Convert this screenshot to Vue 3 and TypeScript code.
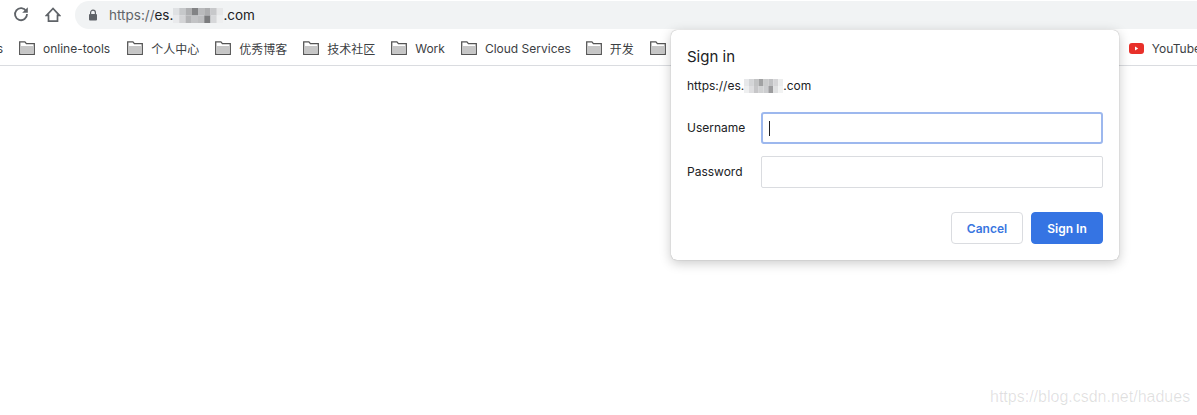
<script setup lang="ts">
const bookmarks: string[] = ['online-tools', '个人中心', '优秀博客', '技术社区', 'Work', 'Cloud Services', '开发', '']
const shades: string[][] = [
  ['#dfe1e3', '#c6c8ca', '#aeafb1', '#828385', '#b9babc', '#acadaf', '#c7c8ca', '#e6e7e8'],
  ['#e9eaec', '#d3d4d6', '#b3b4b6', '#c2c3c5', '#bcbdbf', '#7b7c7e', '#d6d7d9', '#eeeff0'],
]
const mosaic = shades.flatMap((row, y) => row.map((fill, x) => ({ id: `${x}-${y}`, x: x * 6, y: y * 7, fill })))
</script>

<template>
  <div class="page">
    <header class="toolbar">
      <svg class="tool-icon" viewBox="0 1 16 16" width="16" height="16" aria-hidden="true">
        <path d="M13.200 5.200A6 6 0 1 0 14 8" fill="none" stroke="#5f6368" stroke-width="1.800" />
        <path d="M14.800 1.200v5.600H9.200z" fill="#5f6368" />
      </svg>
      <svg class="tool-icon home" viewBox="0 0 16 16" width="16" height="16" aria-hidden="true">
        <path d="M8 1.500 1.600 8.300h1.900v5.900h9V8.300h1.900z" fill="none" stroke="#5f6368" stroke-width="1.700" stroke-linejoin="miter" />
      </svg>
      <div class="omnibox">
        <svg class="lock" viewBox="0 0 10 12" width="10" height="12" aria-hidden="true">
          <path d="M2.600 5V3.500a2.400 2.400 0 0 1 4.800 0V5" fill="none" stroke="#5f6368" stroke-width="1.200" />
          <rect x="1" y="5" width="8" height="6.400" rx="1" fill="#5f6368" />
        </svg>
        <span class="url"><span class="scheme">https://</span>es.<svg class="mosaic" viewBox="0 0 48 14" width="50" height="15" preserveAspectRatio="none" aria-hidden="true"><rect v-for="m in mosaic" :key="m.id" :x="m.x" :y="m.y" width="6" height="7" :fill="m.fill" /></svg>.com</span>
      </div>
    </header>

    <nav class="bookmarks">
      <span class="cut">s</span>
      <span v-for="(b, i) in bookmarks" :key="i" class="bookmark">
        <svg class="folder" viewBox="0 0 16 14" width="16" height="14" aria-hidden="true">
          <path d="M0.700 13.300V0.900h5.200l1.500 1.800h7.900v10.600z" fill="#fff" stroke="#555" stroke-width="1.300" />
          <rect x="1.300" y="5" width="13.400" height="7.700" fill="#c6c6c6" />
        </svg>
        <span v-if="b">{{ b }}</span>
      </span>
      <span class="bookmark youtube">
        <svg viewBox="0 0 15 11" width="15" height="11" aria-hidden="true">
          <rect width="15" height="11" rx="3" fill="#e8302a" />
          <path d="M6 3.500v4l3.200-2z" fill="#fff" />
        </svg>
        <span>YouTube</span>
      </span>
    </nav>

    <main class="content"></main>

    <section class="dialog">
      <h1 class="title">Sign in</h1>
      <p class="origin">https://es.<svg class="mosaic small" viewBox="0 0 48 14" width="39" height="14" preserveAspectRatio="none" aria-hidden="true"><rect v-for="m in mosaic" :key="m.id" :x="m.x" :y="m.y" width="6" height="7" :fill="m.fill" /></svg>.com</p>
      <div class="form">
        <label class="field-label">Username</label>
        <div class="input focused"><i class="caret"></i></div>
        <label class="field-label">Password</label>
        <div class="input"></div>
      </div>
      <div class="actions">
        <button class="btn cancel" type="button">Cancel</button>
        <button class="btn primary" type="button">Sign In</button>
      </div>
    </section>

    <span class="watermark">https://blog.csdn.net/hadues</span>
  </div>
</template>

<style>
html, body { margin: 0; background: #fff; overflow: hidden; }
</style>

<style scoped>
.page {
  position: relative;
  width: 1197px;
  height: 415px;
  overflow: hidden;
  background: #fff;
  font-family: Inter, "Noto Sans CJK SC", sans-serif;
  color: #3c4043;
}
.toolbar {
  display: flex;
  align-items: center;
  height: 30px;
  box-sizing: border-box;
  padding: 1px 0 1px 13px;
}
.tool-icon { flex: none; margin-right: 16px; }
.home { margin-right: 14px; }
.omnibox {
  flex: 1;
  height: 28px;
  display: flex;
  align-items: center;
  gap: 11px;
  padding-left: 13px;
  background: #f1f3f4;
  border-radius: 14px 0 0 14px;
}
.lock { flex: none; }
.url {
  display: flex;
  align-items: center;
  font-size: 13.5px;
  color: #202124;
}
.scheme { color: #5f6368; }
.mosaic { flex: none; display: block; filter: blur(0.6px); }
.small { opacity: 0.75; }
.bookmarks {
  display: flex;
  align-items: center;
  height: 36px;
  box-sizing: border-box;
  padding-top: 1px;
  border-bottom: 1px solid #dadce0;
  font-size: 12px;
  color: #3c4043;
  white-space: nowrap;
  overflow: hidden;
}
.cut { width: 3px; margin-right: 16px; overflow: hidden; flex: none; direction: rtl; }
.bookmark {
  display: flex;
  align-items: center;
  gap: 8px;
  flex: none;
  margin-right: 16px;
}
.bookmark:nth-child(2) { margin-right: 17px; }
.bookmark:nth-child(7) { margin-right: 15px; }
.folder { flex: none; }
.youtube { margin: 0 0 0 447px; gap: 8px; }
.content { height: 349px; }
.dialog {
  position: absolute;
  left: 671px;
  top: 30px;
  width: 448px;
  height: 230px;
  box-sizing: border-box;
  padding: 18px 16px 16px;
  background: #fff;
  border-radius: 6px;
  box-shadow: 0 0 1px rgba(0, 0, 0, .4), 0 3px 12px rgba(0, 0, 0, .22);
  color: #202124;
}
.title {
  margin: 0;
  font-size: 15px;
  font-weight: 400;
  line-height: 18px;
}
.origin {
  display: flex;
  align-items: center;
  margin: 12px 0 0;
  font-size: 12px;
  line-height: 16px;
}
.form {
  display: grid;
  grid-template-columns: 74px 342px;
  grid-auto-rows: 32px;
  row-gap: 12px;
  align-items: center;
  margin-top: 18px;
  font-size: 12px;
}
.field-label { line-height: 16px; }
.input {
  height: 32px;
  box-sizing: border-box;
  border: 1px solid #dadce0;
  border-radius: 2px;
  display: flex;
  align-items: center;
  padding-left: 7px;
}
.focused { border: 2px solid #9db8ee; border-radius: 3px; padding-left: 6px; }
.caret { display: block; width: 1px; height: 15px; background: #202124; }
.actions {
  display: flex;
  justify-content: flex-end;
  gap: 8px;
  margin-top: 24px;
}
.btn {
  width: 72px;
  height: 32px;
  box-sizing: border-box;
  border-radius: 4px;
  font-family: inherit;
  font-size: 12px;
  font-weight: 600;
  padding: 0;
}
.cancel { background: #fff; border: 1px solid #dadce0; color: #3a76e0; }
.primary { background: #3574e3; border: 1px solid #3574e3; color: #fff; }
.watermark {
  position: absolute;
  left: 990px;
  top: 388px;
  font-family: "Liberation Sans", sans-serif;
  font-size: 16px;
  color: rgba(0, 0, 0, .12);
  white-space: nowrap;
}
</style>
